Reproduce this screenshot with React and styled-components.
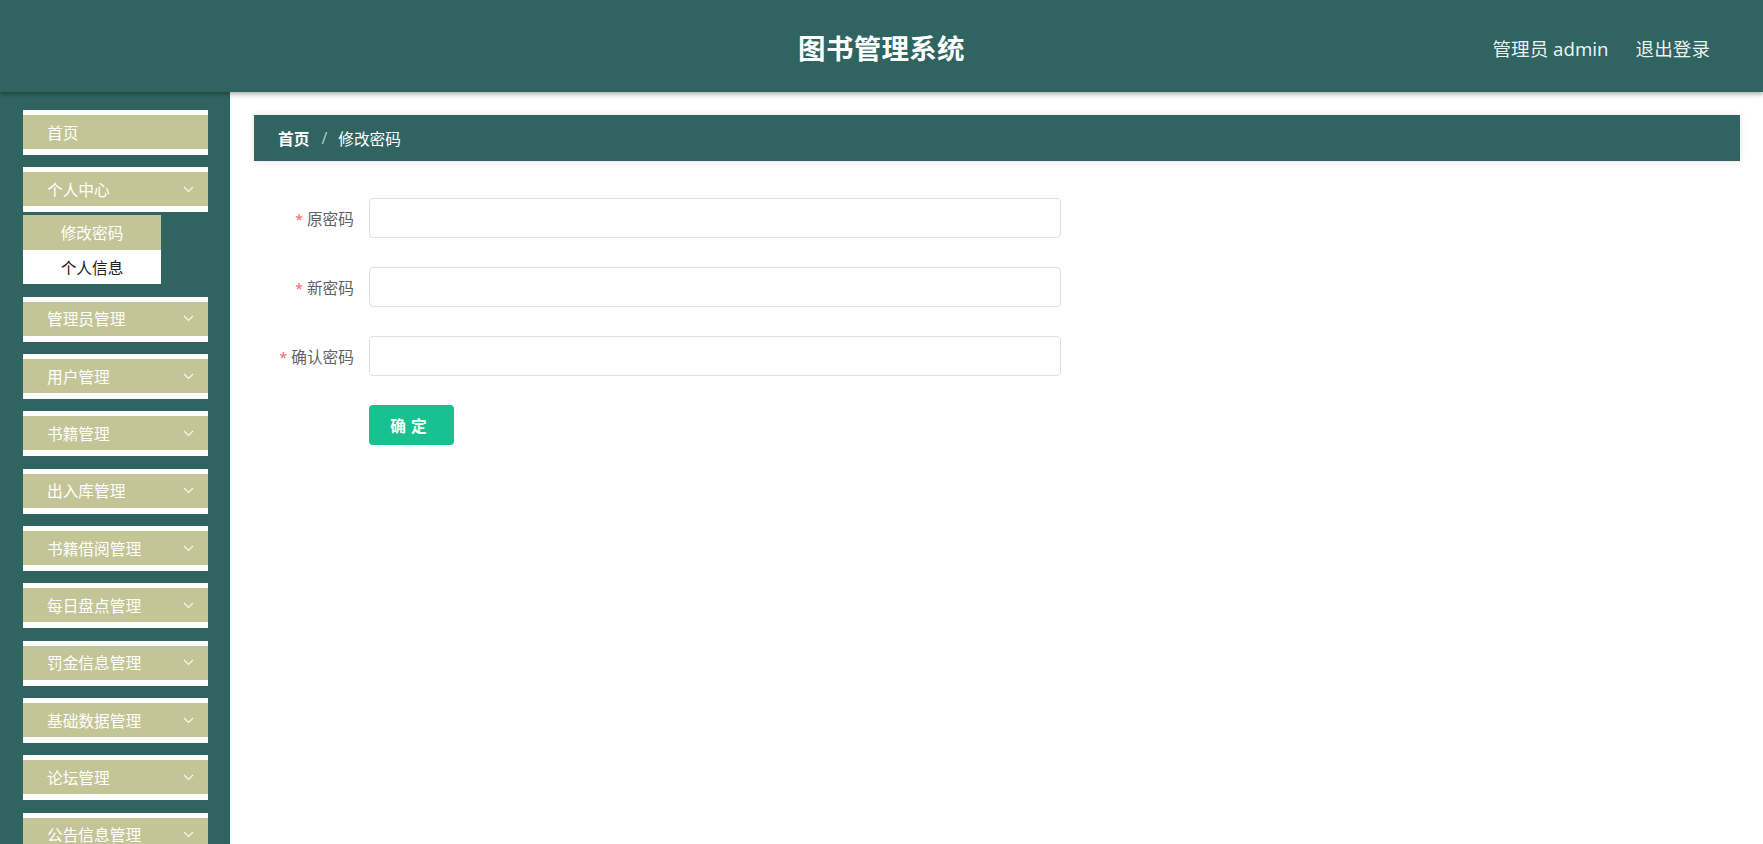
import React from "react";
import styled, { createGlobalStyle } from "styled-components";

const GlobalStyle = createGlobalStyle`
  html, body {
    margin: 0;
    padding: 0;
    height: 100%;
    overflow: hidden;
    font-family: "Noto Sans", "Noto Sans CJK SC", sans-serif;
  }
  * { box-sizing: border-box; }
`;

const TEAL = "#2f6461";
const KHAKI = "#c4c596";

const Page = styled.div`
  height: 100vh;
  display: flex;
  flex-direction: column;
`;

const Header = styled.header`
  position: relative;
  z-index: 2;
  height: 92px;
  flex-shrink: 0;
  background: ${TEAL};
  display: grid;
  grid-template-columns: 1fr auto 1fr;
  align-items: center;
  box-shadow: 0 2px 5px rgba(0, 0, 0, 0.35);
`;

const Title = styled.h1`
  grid-column: 2;
  margin: 0;
  padding-top: 2px;
  color: #fff;
  font-size: 27.5px;
  font-weight: 700;
  letter-spacing: 0.3px;
`;

const UserBox = styled.div`
  grid-column: 3;
  justify-self: end;
  display: flex;
  gap: 27px;
  padding-right: 53px;
  padding-top: 2px;
  color: rgba(255, 255, 255, 0.92);
  font-size: 18.6px;
`;

const Body = styled.div`
  flex: 1;
  display: flex;
  min-height: 0;
`;

const Sidebar = styled.aside`
  width: 230px;
  flex-shrink: 0;
  background: ${TEAL};
  padding: 18px 22px 0 23px;
  overflow: hidden;
`;

const MenuItem = styled.div`
  margin-bottom: ${(p) => (p.$open ? "3px" : "12.35px")};
`;

const MenuHead = styled.div`
  height: 45px;
  border-top: 5px solid #fff;
  border-bottom: 6px solid #fff;
  background: ${KHAKI};
  display: flex;
  align-items: center;
  justify-content: space-between;
  padding: 0 14px 0 24px;
  color: #fff;
  font-size: 15.7px;
`;

const SubMenu = styled.div`
  width: 138px;
  margin-bottom: 12.35px;
`;

const SubItem = styled.div`
  height: 34.5px;
  display: flex;
  align-items: center;
  justify-content: center;
  font-size: 15.7px;
  background: ${(p) => (p.$active ? KHAKI : "#fff")};
  color: ${(p) => (p.$active ? "#fff" : "#222")};
`;

const Main = styled.main`
  flex: 1;
  background: #fff;
  padding: 23px 23px 0 24px;
`;

const Breadcrumb = styled.div`
  height: 46px;
  background: ${TEAL};
  display: flex;
  align-items: center;
  padding-left: 24px;
  color: #fff;
  font-size: 15.7px;
  box-shadow: 0 0 6px rgba(0, 0, 0, 0.12);
`;

const Crumb = styled.span`
  font-weight: ${(p) => (p.$strong ? 700 : 400)};
`;

const Sep = styled.span`
  margin: 0 11px 0 12px;
  color: #b9c6c5;
`;

const Form = styled.form`
  margin-top: 37px;
  display: flex;
  flex-direction: column;
  gap: 29px;
`;

const Row = styled.div`
  display: grid;
  grid-template-columns: 115px 692px;
  align-items: center;
`;

const Label = styled.label`
  text-align: right;
  padding-right: 15px;
  color: #606266;
  font-size: 15.7px;
`;

const Star = styled.span`
  color: #f56c6c;
  margin-right: 4px;
  font-size: 14px;
`;

const Input = styled.input`
  height: 40px;
  width: 100%;
  border: 1px solid #dcdfe6;
  border-radius: 4px;
  padding: 0 15px;
  font-size: 15px;
  outline: none;
`;

const SubmitButton = styled.button`
  grid-column: 2;
  width: 85px;
  height: 40px;
  border: none;
  border-radius: 4px;
  background: #17c290;
  color: #fff;
  font-family: inherit;
  font-size: 15.7px;
  font-weight: 700;
  letter-spacing: 5px;
  padding-left: 5px;
  cursor: pointer;
`;

const Chevron = () => (
  <svg width="11" height="7" viewBox="0 0 11 7" fill="none">
    <polyline
      points="1,1 5.5,5.5 10,1"
      stroke="rgba(255,255,255,0.85)"
      strokeWidth="1.2"
    />
  </svg>
);

const menus = [
  { title: "首页" },
  { title: "个人中心", open: true, children: ["修改密码", "个人信息"] },
  { title: "管理员管理" },
  { title: "用户管理" },
  { title: "书籍管理" },
  { title: "出入库管理" },
  { title: "书籍借阅管理" },
  { title: "每日盘点管理" },
  { title: "罚金信息管理" },
  { title: "基础数据管理" },
  { title: "论坛管理" },
  { title: "公告信息管理" },
];

const fields = ["原密码", "新密码", "确认密码"];

export default function App() {
  return (
    <Page>
      <GlobalStyle />
      <Header>
        <Title>图书管理系统</Title>
        <UserBox>
          <span>管理员 admin</span>
          <span>退出登录</span>
        </UserBox>
      </Header>
      <Body>
        <Sidebar>
          {menus.map((m, i) => (
            <React.Fragment key={m.title}>
              <MenuItem $open={m.open}>
                <MenuHead>
                  <span>{m.title}</span>
                  {i > 0 && <Chevron />}
                </MenuHead>
              </MenuItem>
              {m.children && (
                <SubMenu>
                  {m.children.map((c, j) => (
                    <SubItem key={c} $active={j === 0}>
                      {c}
                    </SubItem>
                  ))}
                </SubMenu>
              )}
            </React.Fragment>
          ))}
        </Sidebar>
        <Main>
          <Breadcrumb>
            <Crumb $strong>首页</Crumb>
            <Sep>/</Sep>
            <Crumb>修改密码</Crumb>
          </Breadcrumb>
          <Form onSubmit={(e) => e.preventDefault()}>
            {fields.map((f) => (
              <Row key={f}>
                <Label>
                  <Star>*</Star>
                  {f}
                </Label>
                <Input type="password" />
              </Row>
            ))}
            <Row>
              <SubmitButton type="submit">确定</SubmitButton>
            </Row>
          </Form>
        </Main>
      </Body>
    </Page>
  );
}
